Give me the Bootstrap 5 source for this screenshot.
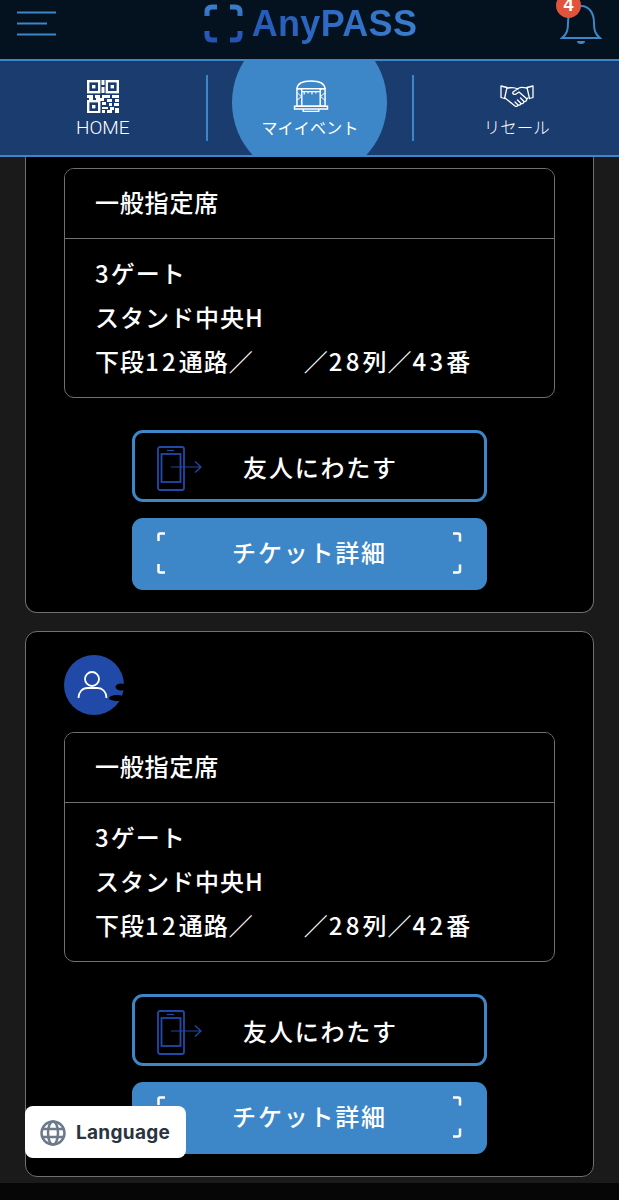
<!DOCTYPE html>
<html lang="ja">
<head>
    <meta charset="UTF-8">
    <meta name="viewport" content="width=device-width, initial-scale=1.0">
    <title>AnyPASS</title>
    <link href="https://cdn.jsdelivr.net/npm/bootstrap@5.3.0/dist/css/bootstrap.min.css" rel="stylesheet">
    <style>
        body {
            background: #060606;
            font-family: "Noto Sans CJK JP", "Liberation Sans", sans-serif;
            height: 1200px;
            overflow: hidden;
            position: relative;
        }
        .app-head {
            height: 59px;
            background: #04111f;
            padding: 0 17px 0 17px;
        }
        .menu-icon { margin-top: 11px; }
        .logo-wrap { gap: 9px; margin-top: 4px; margin-left: 4px; }
        .logo-text {
            font-family: "Liberation Sans", sans-serif;
            font-weight: 700;
            font-size: 36px;
            line-height: 40px;
            letter-spacing: .3px;
            background: linear-gradient(100deg, #2459b8 0%, #3a7fce 100%);
            -webkit-background-clip: text;
            background-clip: text;
            color: transparent;
        }
        .bell-wrap { width: 42px; height: 59px; position: relative; }
        .bell-count {
            position: absolute;
            left: -4px;
            top: -7px;
            width: 25px;
            height: 25px;
            border-radius: 50%;
            background: #e2533c;
            color: #fff;
            font: 700 18px/25px "Liberation Sans", sans-serif;
            text-align: center;
        }
        .tab-bar {
            height: 98px;
            background: #1b3c6e;
            border-top: 2px solid #3d87c9;
            border-bottom: 2px solid #3d87c9;
            position: relative;
            overflow: hidden;
        }
        .tab-bar::before {
            content: "";
            position: absolute;
            left: 232px;
            top: -36px;
            width: 155px;
            height: 155px;
            border-radius: 50%;
            background: #3d87c9;
        }
        .tab-item {
            position: relative;
            color: #fff;
            text-decoration: none;
            font-size: 16.5px;
            font-weight: 300;
            line-height: 24px;
        }
        .tab-home { width: 207px; }
        .tab-mine { width: 206px; font-weight: 400; font-size: 16px; letter-spacing: .2px; }
        .tab-mine svg { margin-left: 2px; }
        .tab-sell { width: 206px; }
        .tab-rule {
            position: relative;
            width: 2px;
            height: 66px;
            margin-top: 14px;
            background: #3d87c9;
        }
        .tab-icon { height: 34px; display: flex; align-items: center; justify-content: center; margin-top: 18px; margin-bottom: 2px; }
        .tab-label-home { font-size: 19px; font-family: "Roboto", "Liberation Sans", sans-serif; font-weight: 300; }
        .page-main { background: #1a1a1a; padding: 0 25px 6px; }
        .ticket-card {
            --bs-card-bg: #000;
            --bs-card-border-color: #707070;
            --bs-card-border-radius: 12px;
            --bs-card-inner-border-radius: 11px;
            padding: 23px 38px 22px;
            margin-bottom: 18px;
        }
        .ticket-card:last-child { margin-bottom: 0; }
        .ticket-first {
            border-top: 0;
            border-top-left-radius: 0;
            border-top-right-radius: 0;
            padding-top: 11px;
        }
        .avatar-svg { display: block; margin-bottom: 17px; }
        .seat-box {
            --bs-card-bg: #000;
            --bs-card-border-color: #707070;
            --bs-card-border-radius: 10px;
            --bs-card-inner-border-radius: 9px;
            --bs-card-cap-bg: #000;
            color: #fff;
            font-size: 24px;
            height: 230px;
            margin-bottom: 32px;
            font-weight: 500;
            letter-spacing: 1px;
        }
        .seat-box .card-header {
            height: 70px;
            padding: 0 30px 4px;
            display: flex;
            align-items: center;
            border-bottom-color: #707070;
            line-height: 1;
            letter-spacing: .8px;
        }
        .seat-box .card-body { padding: 12px 30px 0; line-height: 44px; }
        .seat-line { white-space: pre; }
        .seat-digit { letter-spacing: 3.2px; }
        .seat-one { letter-spacing: 2px; }
        .act-btn {
            position: relative;
            display: flex;
            align-items: center;
            justify-content: center;
            width: 355px;
            height: 72px;
            margin: 0 auto;
            border-radius: 11px;
            color: #fff;
            font-size: 24px;
            font-weight: 500;
            letter-spacing: 1.8px;
            padding: 0;
        }
        .act-send { border: 3px solid #3d87c9; background: #000; margin-bottom: 16px; padding: 1px 0 0 22px; }
        .act-detail { border: 0; background: #3d87c9; padding-bottom: 4px; }
        .act-send:hover { color: #fff; background: #000; border-color: #3d87c9; }
        .act-detail:hover { color: #fff; background: #3d87c9; }
        .act-send svg { position: absolute; left: 22px; top: 13px; }
        .act-detail svg { position: absolute; left: 25px; top: 14px; }
        .lang-btn {
            position: absolute;
            left: 25px;
            top: 1106px;
            width: 161px;
            height: 52px;
            background: #fff;
            border-radius: 8px;
            color: #2a3340;
            font: 700 19px/52px "Inter", "Liberation Sans", sans-serif;
            letter-spacing: .3px;
            padding: 2px 0 0 15px;
            gap: 10px;
            border: 0;
        }
    </style>
</head>
<body>
    <header class="app-head d-flex align-items-start justify-content-between">
        <svg class="menu-icon flex-shrink-0" width="40" height="26" viewBox="0 0 40 26">
            <path d="M0 1.5h39M0 12.5h30M0 23.5h39" stroke="#3d87c9" stroke-width="2" fill="none"/>
        </svg>
        <div class="logo-wrap d-flex align-items-start">
            <svg width="39" height="39" viewBox="0 0 39 39" class="flex-shrink-0">
                <defs>
                    <linearGradient id="logoGrad" x1="0" y1="0" x2="0" y2="1">
                        <stop offset="0" stop-color="#3a7ccb"/>
                        <stop offset="1" stop-color="#2352b4"/>
                    </linearGradient>
                </defs>
                <path d="M13 3H8Q3 3 3 8v4M26 3h5q5 0 5 5v4M13 36H8q-5 0-5-5v-4M26 36h5q5 0 5-5v-4" fill="none" stroke="url(#logoGrad)" stroke-width="5"/>
            </svg>
            <span class="logo-text">AnyPASS</span>
        </div>
        <div class="bell-wrap">
            <svg width="42" height="46" viewBox="0 0 42 46">
                <path d="M2 38c5-4 6-8 6-15 0-9 4-17 13-17s13 8 13 17c0 7 1 11 6 15z" fill="none" stroke="#3d87c9" stroke-width="2"/>
                <path d="M17 41h8a4 3 0 0 1-8 0z" fill="#3d87c9"/>
            </svg>
            <span class="bell-count">4</span>
        </div>
    </header>

    <nav class="tab-bar d-flex">
        <a href="#" class="tab-item tab-home text-center">
            <div class="tab-icon">
                <svg width="32" height="33" viewBox="0 0 32 33">
                    <g fill="none" stroke="#fff" stroke-width="2.4">
                        <rect x="1.2" y="1.2" width="11" height="11"/>
                        <rect x="19.8" y="1.2" width="11" height="11"/>
                        <rect x="1.2" y="21.2" width="11" height="11"/>
                    </g>
                    <g fill="#fff">
                        <rect x="5" y="5" width="3.4" height="3.4"/><rect x="23.6" y="5" width="3.4" height="3.4"/><rect x="5" y="25" width="3.4" height="3.4"/>
                        <rect x="14.500" y="0" width="3" height="5"/><rect x="14.500" y="7" width="3" height="6"/>
                        <rect x="0" y="15" width="6" height="3"/><rect x="8" y="15" width="5" height="3"/><rect x="15" y="15" width="8" height="3"/><rect x="25" y="15" width="7" height="3"/>
                        <rect x="2" y="18" width="4" height="2"/><rect x="9" y="18" width="8" height="3"/><rect x="20" y="19" width="5" height="3"/><rect x="28" y="19" width="4" height="3"/>
                        <rect x="15" y="22" width="4" height="3"/><rect x="22" y="23" width="3" height="3"/><rect x="27" y="23" width="5" height="3"/>
                        <rect x="15" y="27" width="6" height="2"/><rect x="23" y="27" width="4" height="3"/><rect x="15" y="30" width="3" height="3"/><rect x="20" y="30" width="5" height="3"/><rect x="28" y="28" width="4" height="5"/>
                    </g>
                </svg>
            </div>
            <span class="tab-label-home">HOME</span>
        </a>
        <div class="tab-rule"></div>
        <a href="#" class="tab-item tab-mine text-center">
            <div class="tab-icon">
                <svg width="36" height="32" viewBox="0 0 36 33" fill="none" stroke="#fff" stroke-width="1.5">
                    <path d="M3.500 9C4 3 10 1 18 1s14 2 14.500 8"/>
                    <path d="M3.500 9h29"/>
                    <rect x="3.500" y="9" width="5" height="18"/>
                    <rect x="27.500" y="9" width="5" height="18"/>
                    <path d="M8.500 12h19M8.500 27h19"/>
                    <path d="M11 12v3M15 12v2M19 12v3M23 12v2" stroke-width="1.200"/>
                    <path d="M1 27h34v3H1zM10 30h16v2.500H10z"/>
                    <path d="M3.500 13l4.500 4-4.500 4M32.500 13l-4.500 4 4.500 4" stroke-width="1"/>
                </svg>
            </div>
            <span>マイイベント</span>
        </a>
        <div class="tab-rule"></div>
        <a href="#" class="tab-item tab-sell text-center">
            <div class="tab-icon">
                <svg width="34" height="24" viewBox="0 0 34 24" fill="none" stroke="#fff" stroke-width="1.300" stroke-linejoin="round" stroke-linecap="round">
                    <path d="M1 2l6 1.500-2.500 11L1 13.500zM33 2l-6 1.500 2.500 11 3.500-1z"/>
                    <path d="M7 4c3 0 5 -1 8 0l3 1M27 4c-3 0-5-1.500-8 0l-6 4c-1 2 1.500 3 3 2l3-2 8 7"/>
                    <path d="M5 14l10 8c1.500 1 3 0 3-1 1.500.5 3-.5 3-1.500 1.500.5 3-.5 3-2 1.500.5 3-1 2.500-2.500l1.500-1"/>
                    <path d="M18 21l-3-3M21 19.500l-3.500-3.500M24 17.500l-3.500-3.500"/>
                </svg>
            </div>
            <span>リセール</span>
        </a>
    </nav>

    <main class="page-main">
        <section class="card ticket-card ticket-first">
            <div class="card seat-box">
                <div class="card-header">一般指定席</div>
                <div class="card-body">
                    <div class="seat-line"><span class="seat-one">3</span>ゲート</div>
                    <div class="seat-line">スタンド中央H</div>
                    <div class="seat-line">下段<span class="seat-digit">12</span>通路／　　／<span class="seat-digit">28</span>列／<span class="seat-digit">43</span>番</div>
                </div>
            </div>
            <a href="#" class="btn act-btn act-send">
                <svg width="46" height="46" viewBox="0 0 46 46" fill="none" stroke="#2149a8" stroke-width="1.800">
                    <rect x="1" y="1" width="26" height="43" rx="2"/>
                    <rect x="4.500" y="8" width="19" height="28"/>
                    <path d="M10 4.500h7" stroke-width="1.200"/>
                    <path d="M14 21h30M38 15.500l6 5.500-6 5.500" stroke-width="1.200"/>
                </svg>
                友人にわたす
            </a>
            <a href="#" class="btn act-btn act-detail">
                <svg width="306" height="42" viewBox="0 0 306 42" fill="none" stroke="#fff" stroke-width="2.500">
                    <path d="M8 1.500H3Q1.500 1.500 1.500 3v6M296 1.500h5q2 0 2 2v6M8 40.500H3q-1.500 0-1.500-1.500v-7M296 40.500h5q2 0 2-2v-6"/>
                </svg>
                チケット詳細
            </a>
        </section>

        <section class="card ticket-card">
            <svg class="avatar-svg" width="60" height="60" viewBox="0 0 60 60">
                <circle cx="30" cy="30" r="30" fill="#2149a8"/>
                <ellipse cx="57" cy="32" rx="5.500" ry="3.500" fill="#000"/>
                <ellipse cx="53" cy="43" rx="8" ry="3" fill="#000"/>
                <circle cx="28" cy="24" r="7" fill="none" stroke="#fff" stroke-width="1.800"/>
                <path d="M14.500 43c0-6 4-10 9-10h10c5 0 9 4 9 10" fill="none" stroke="#fff" stroke-width="1.800"/>
            </svg>
            <div class="card seat-box">
                <div class="card-header">一般指定席</div>
                <div class="card-body">
                    <div class="seat-line"><span class="seat-one">3</span>ゲート</div>
                    <div class="seat-line">スタンド中央H</div>
                    <div class="seat-line">下段<span class="seat-digit">12</span>通路／　　／<span class="seat-digit">28</span>列／<span class="seat-digit">42</span>番</div>
                </div>
            </div>
            <a href="#" class="btn act-btn act-send">
                <svg width="46" height="46" viewBox="0 0 46 46" fill="none" stroke="#2149a8" stroke-width="1.800">
                    <rect x="1" y="1" width="26" height="43" rx="2"/>
                    <rect x="4.500" y="8" width="19" height="28"/>
                    <path d="M10 4.500h7" stroke-width="1.200"/>
                    <path d="M14 21h30M38 15.500l6 5.500-6 5.500" stroke-width="1.200"/>
                </svg>
                友人にわたす
            </a>
            <a href="#" class="btn act-btn act-detail">
                <svg width="306" height="42" viewBox="0 0 306 42" fill="none" stroke="#fff" stroke-width="2.500">
                    <path d="M8 1.500H3Q1.500 1.500 1.500 3v6M296 1.500h5q2 0 2 2v6M8 40.500H3q-1.500 0-1.500-1.500v-7M296 40.500h5q2 0 2-2v-6"/>
                </svg>
                チケット詳細
            </a>
        </section>
    </main>

    <button type="button" class="btn lang-btn d-flex align-items-center">
        <svg width="26" height="26" viewBox="0 0 26 26" fill="none" stroke="#6c7a8c" stroke-width="2.500" class="flex-shrink-0">
            <circle cx="13" cy="13" r="11.500"/>
            <ellipse cx="13" cy="13" rx="5" ry="11.500"/>
            <path d="M2.500 9h21M2.500 17h21"/>
        </svg>
        Language
    </button>
</body>
</html>
